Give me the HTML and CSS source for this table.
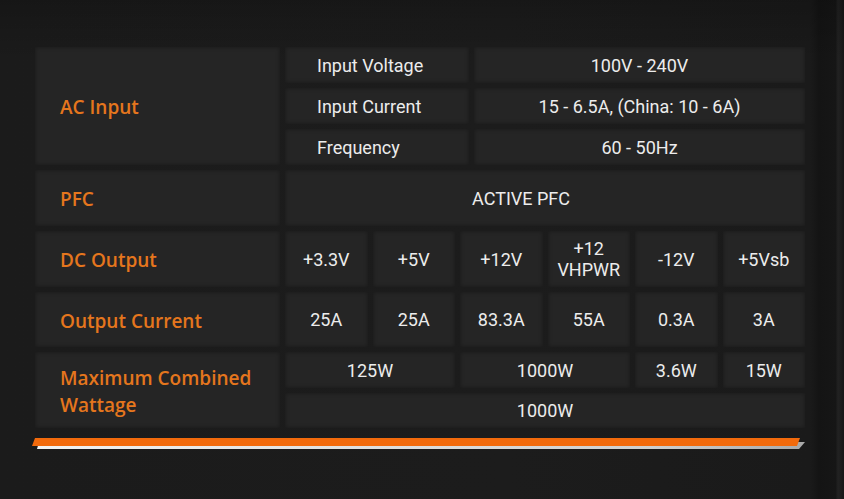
FILE: index.html
```html
<!DOCTYPE html>
<html>
<head>
<meta charset="utf-8">
<link rel="stylesheet" href="styles.css">
</head>
<body>
<div class="page">
  <div class="spec">
    <section class="group ac">
      <div class="label span3">AC Input</div>
      <div class="cell left">Input Voltage</div>
      <div class="cell">100V - 240V</div>
      <div class="cell left">Input Current</div>
      <div class="cell">15 - 6.5A, (China: 10 - 6A)</div>
      <div class="cell left">Frequency</div>
      <div class="cell">60 - 50Hz</div>
    </section>
    <section class="group pfc">
      <div class="label">PFC</div>
      <div class="cell offset">ACTIVE PFC</div>
    </section>
    <section class="group six tall">
      <div class="label">DC Output</div>
      <div class="cell">+3.3V</div>
      <div class="cell">+5V</div>
      <div class="cell">+12V</div>
      <div class="cell">+12<br>VHPWR</div>
      <div class="cell">-12V</div>
      <div class="cell">+5Vsb</div>
    </section>
    <section class="group six mid">
      <div class="label">Output Current</div>
      <div class="cell">25A</div>
      <div class="cell">25A</div>
      <div class="cell">83.3A</div>
      <div class="cell">55A</div>
      <div class="cell">0.3A</div>
      <div class="cell">3A</div>
    </section>
    <section class="group six two">
      <div class="label span2">Maximum Combined<br>Wattage</div>
      <div class="cell w2">125W</div>
      <div class="cell w2">1000W</div>
      <div class="cell">3.6W</div>
      <div class="cell">15W</div>
      <div class="cell w6">1000W</div>
    </section>
  </div>
  <div class="bar"></div>
</div>
</body>
</html>
```
FILE: styles.css
```css
* { box-sizing: border-box; }
html, body { margin: 0; padding: 0; }
body {
  width: 844px;
  height: 499px;
  overflow: hidden;
  background:
    linear-gradient(180deg, rgba(0,0,0,0.18) 0%, rgba(0,0,0,0) 12%),
    linear-gradient(90deg, #1b1b1b 0%, #1c1c1c 60%, #1a1a1a 96%, #141414 97%, #161616 99%, #222 99.3%, #171717 100%);
  font-family: Roboto, "Liberation Sans", sans-serif;
}
.page {
  padding: 47px 0 0 35px;
}
.spec {
  width: 770px;
  display: flex;
  flex-direction: column;
  gap: 5px;
}
.group {
  display: grid;
  gap: 5px;
}
.ac {
  grid-template-columns: 245px 184px 1fr;
  grid-template-rows: 36px 36px 36px;
}
.pfc {
  grid-template-columns: 245px 1fr;
  grid-template-rows: 56px;
}
.six {
  grid-template-columns: 245px repeat(6, 1fr);
}
.tall { grid-template-rows: 56px; }
.mid { grid-template-rows: 55px; }
.two { grid-template-rows: 36px 35px; }
.span3 { grid-row: span 3; }
.span2 { grid-row: span 2; }
.w2 { grid-column: span 2; }
.w6 { grid-column: 2 / span 6; }

.label, .cell {
  background: #252525;
  box-shadow: inset 0 0 4px rgba(0, 0, 0, 0.35);
  display: flex;
  align-items: center;
}
.label {
  padding: 3px 0 0 25px;
  color: #e5761d;
  font-family: "Open Sans", "Noto Sans", sans-serif;
  font-weight: 600;
  font-size: 19px;
  line-height: 27px;
}
.cell {
  justify-content: center;
  text-align: center;
  color: #ececec;
  font-size: 18px;
  line-height: 21px;
}
.cell.left {
  justify-content: flex-start;
  padding-left: 32px;
}
.cell.offset {
  padding-right: 48px;
}
.bar {
  position: relative;
  width: 773px;
  height: 11px;
  margin: 10px 0 0 -3px;
}
.bar::before,
.bar::after {
  content: "";
  position: absolute;
}
.bar::after {
  left: 5px;
  right: 0;
  top: 4px;
  height: 7px;
  background: linear-gradient(90deg, #f2f2f2, #cfcfcf 80%, #a9a9a9);
  clip-path: polygon(0 100%, 2px 0, 100% 0, calc(100% - 6px) 100%);
}
.bar::before {
  left: 0;
  right: 5px;
  top: 0;
  height: 8px;
  z-index: 1;
  background: #f26a0c;
  clip-path: polygon(0 100%, 3px 0, 100% 0, calc(100% - 3px) 100%);
}
```
